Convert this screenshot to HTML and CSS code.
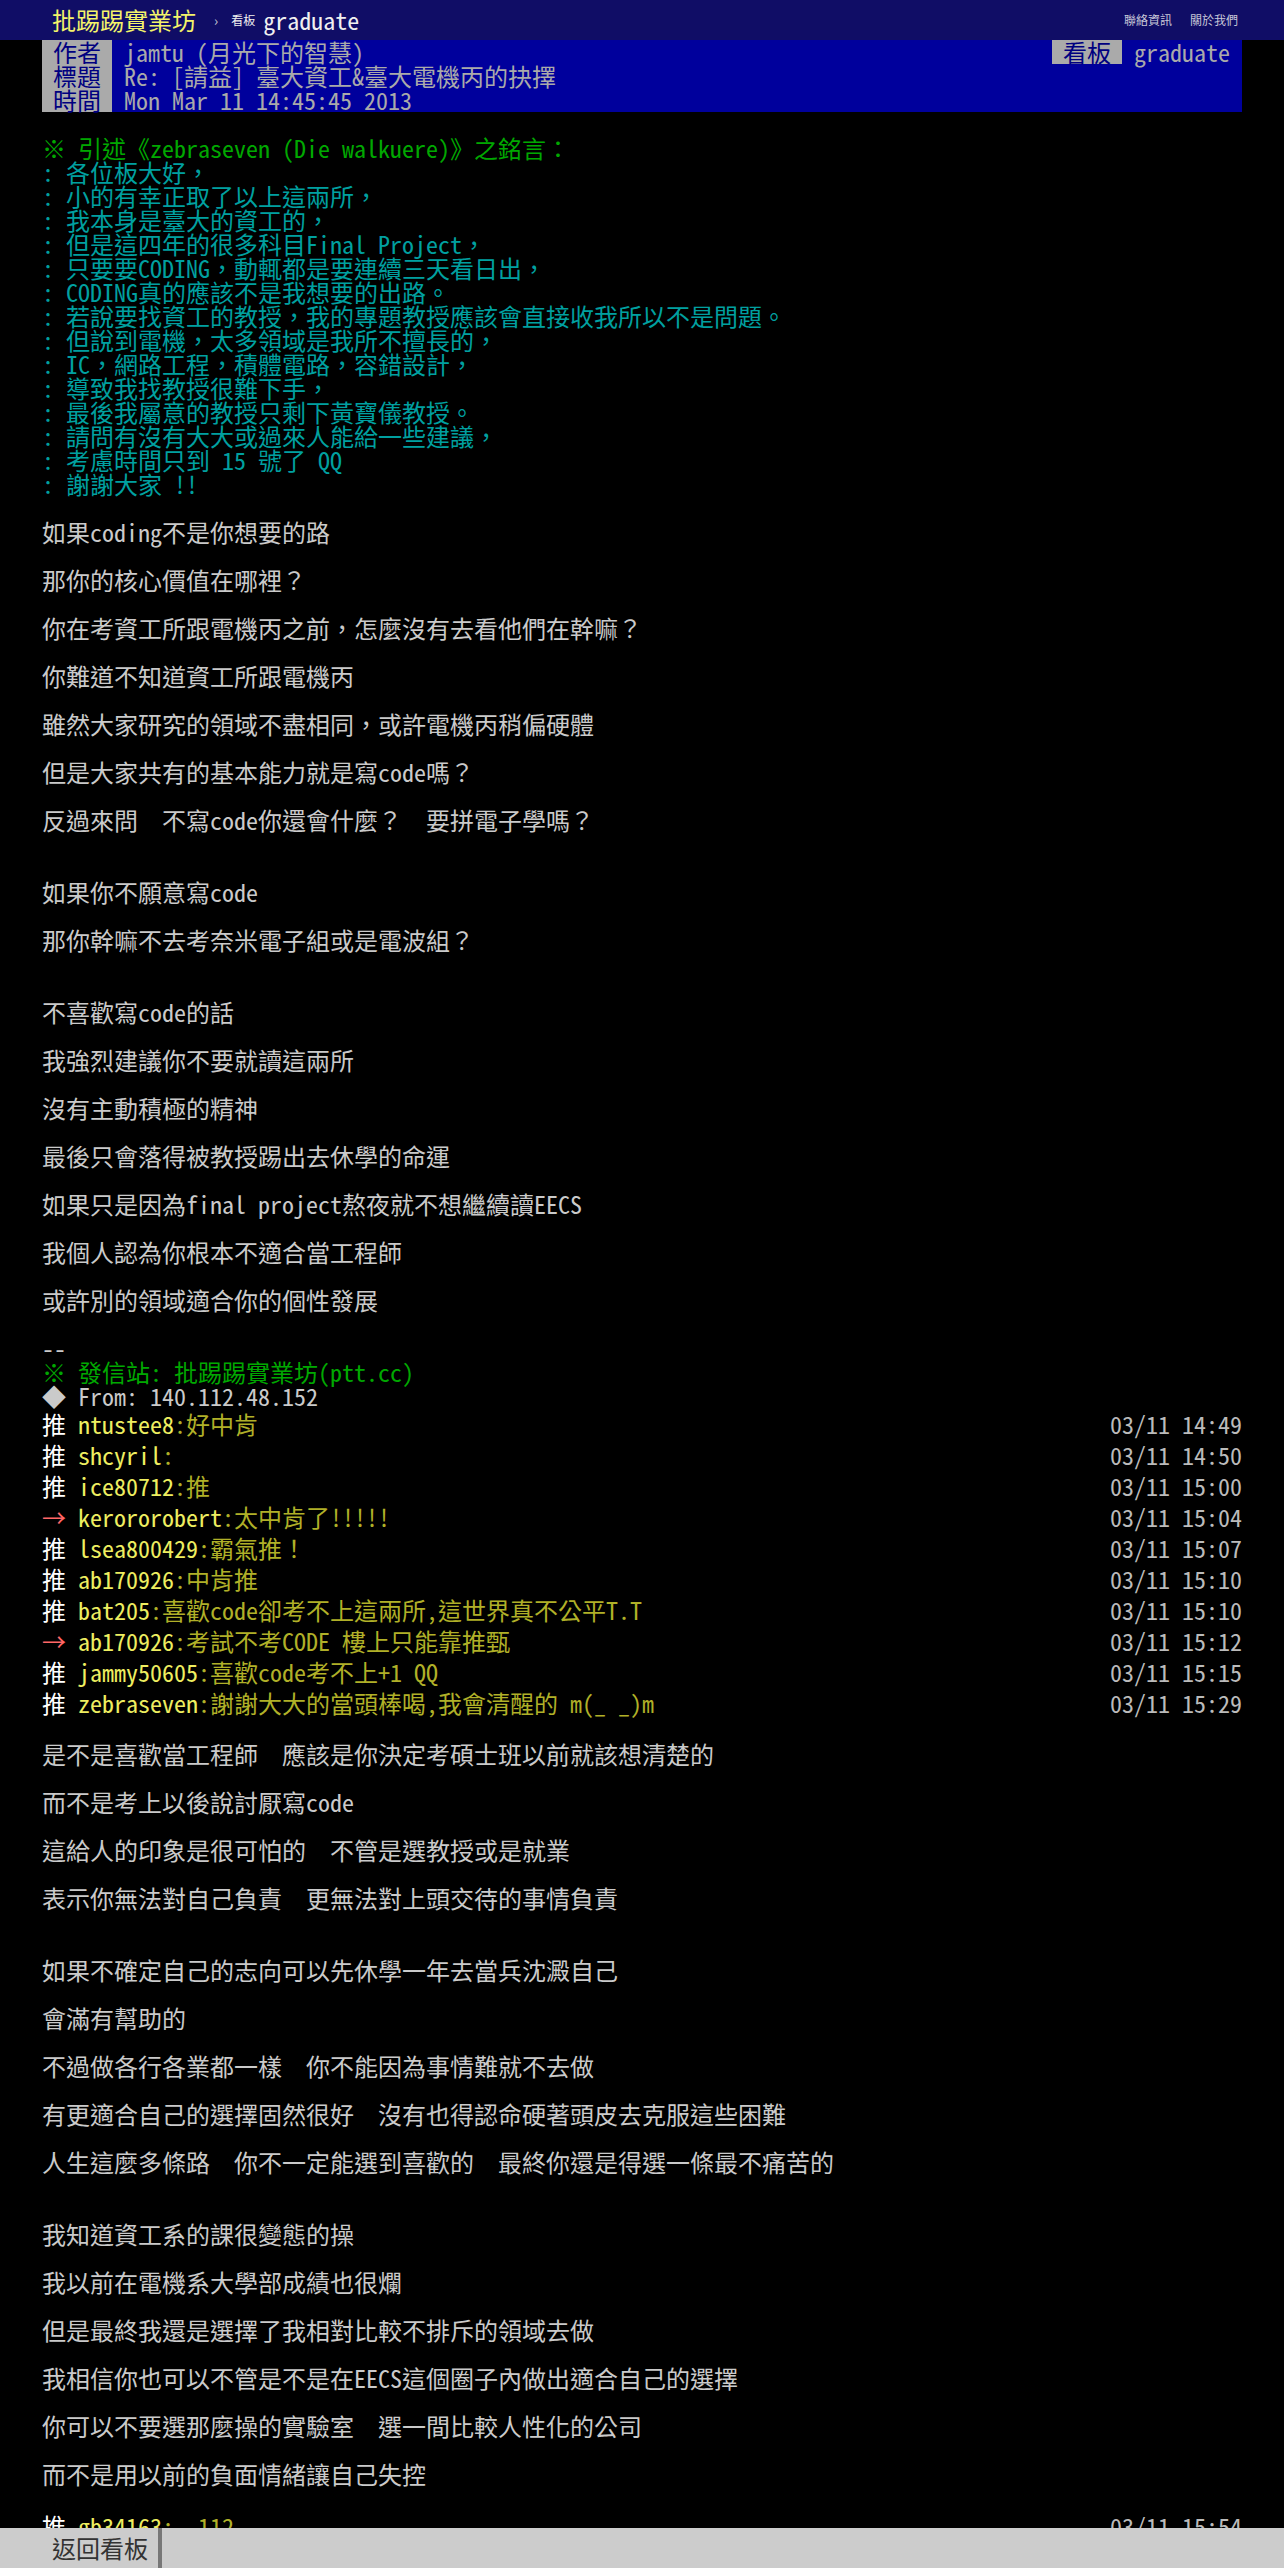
FILE: index.html
```html
<!DOCTYPE html>
<html lang="zh-Hant">
<head>
<meta charset="utf-8">
<title>Re: [請益] 臺大資工&amp;臺大電機丙的抉擇 - 看板 graduate - 批踢踢實業坊</title>
<link rel="stylesheet" href="styles.css">
</head>
<body>
<div class="topbar">
  <div class="topbar-inner">
    <a class="logo">批踢踢實業坊</a>
    <span class="sep">›</span>
    <a class="board"><span class="board-label">看板</span><span class="board-name">graduate</span></a>
    <nav class="links"><a>聯絡資訊</a><a>關於我們</a></nav>
  </div>
</div>

<div class="main">
  <div class="meta">
    <div class="metaline">
      <span class="tag">作者</span><span class="value">jamtu (月光下的智慧)</span>
      <span class="tag">看板</span><span class="value value-right">graduate</span>
    </div>
    <div class="metaline">
      <span class="tag">標題</span><span class="value">Re: [請益] 臺大資工&amp;臺大電機丙的抉擇</span>
    </div>
    <div class="metaline">
      <span class="tag">時間</span><span class="value">Mon Mar 11 14:45:45 2013</span>
    </div>
  </div>

<div class="text first"><span class="f2">※ 引述《zebraseven (Die walkuere)》之銘言：</span>
<span class="f6">: 各位板大好，</span>
<span class="f6">: 小的有幸正取了以上這兩所，</span>
<span class="f6">: 我本身是臺大的資工的，</span>
<span class="f6">: 但是這四年的很多科目Final Project，</span>
<span class="f6">: 只要要CODING，動輒都是要連續三天看日出，</span>
<span class="f6">: CODING真的應該不是我想要的出路。</span>
<span class="f6">: 若說要找資工的教授，我的專題教授應該會直接收我所以不是問題。</span>
<span class="f6">: 但說到電機，太多領域是我所不擅長的，</span>
<span class="f6">: IC，網路工程，積體電路，容錯設計，</span>
<span class="f6">: 導致我找教授很難下手，</span>
<span class="f6">: 最後我屬意的教授只剩下黃寶儀教授。</span>
<span class="f6">: 請問有沒有大大或過來人能給一些建議，</span>
<span class="f6">: 考慮時間只到 15 號了 QQ</span>
<span class="f6">: 謝謝大家 !!</span>

如果coding不是你想要的路

那你的核心價值在哪裡？

你在考資工所跟電機丙之前，怎麼沒有去看他們在幹嘛？

你難道不知道資工所跟電機丙

雖然大家研究的領域不盡相同，或許電機丙稍偏硬體

但是大家共有的基本能力就是寫code嗎？

反過來問　不寫code你還會什麼？　要拼電子學嗎？


如果你不願意寫code

那你幹嘛不去考奈米電子組或是電波組？


不喜歡寫code的話

我強烈建議你不要就讀這兩所

沒有主動積極的精神

最後只會落得被教授踢出去休學的命運

如果只是因為final project熬夜就不想繼續讀EECS

我個人認為你根本不適合當工程師

或許別的領域適合你的個性發展

--
<span class="f2">※ 發信站: 批踢踢實業坊(ptt.cc)</span>
◆ From: 140.112.48.152</div>

  <div class="pushes">
    <div class="push"><span class="push-tag">推 </span><span class="push-user">ntustee8</span><span class="push-content">:好中肯</span><span class="push-time">03/11 14:49</span></div>
    <div class="push"><span class="push-tag">推 </span><span class="push-user">shcyril</span><span class="push-content">:</span><span class="push-time">03/11 14:50</span></div>
    <div class="push"><span class="push-tag">推 </span><span class="push-user">ice80712</span><span class="push-content">:推</span><span class="push-time">03/11 15:00</span></div>
    <div class="push"><span class="push-tag arrow">→ </span><span class="push-user">kerororobert</span><span class="push-content">:太中肯了!!!!!</span><span class="push-time">03/11 15:04</span></div>
    <div class="push"><span class="push-tag">推 </span><span class="push-user">lsea800429</span><span class="push-content">:霸氣推！</span><span class="push-time">03/11 15:07</span></div>
    <div class="push"><span class="push-tag">推 </span><span class="push-user">ab170926</span><span class="push-content">:中肯推</span><span class="push-time">03/11 15:10</span></div>
    <div class="push"><span class="push-tag">推 </span><span class="push-user">bat205</span><span class="push-content">:喜歡code卻考不上這兩所,這世界真不公平T.T</span><span class="push-time">03/11 15:10</span></div>
    <div class="push"><span class="push-tag arrow">→ </span><span class="push-user">ab170926</span><span class="push-content">:考試不考CODE 樓上只能靠推甄</span><span class="push-time">03/11 15:12</span></div>
    <div class="push"><span class="push-tag">推 </span><span class="push-user">jammy50605</span><span class="push-content">:喜歡code考不上+1 QQ</span><span class="push-time">03/11 15:15</span></div>
    <div class="push"><span class="push-tag">推 </span><span class="push-user">zebraseven</span><span class="push-content">:謝謝大大的當頭棒喝,我會清醒的 m(_ _)m</span><span class="push-time">03/11 15:29</span></div>
  </div>

<div class="text second">是不是喜歡當工程師　應該是你決定考碩士班以前就該想清楚的

而不是考上以後說討厭寫code

這給人的印象是很可怕的　不管是選教授或是就業

表示你無法對自己負責　更無法對上頭交待的事情負責


如果不確定自己的志向可以先休學一年去當兵沈澱自己

會滿有幫助的

不過做各行各業都一樣　你不能因為事情難就不去做

有更適合自己的選擇固然很好　沒有也得認命硬著頭皮去克服這些困難

人生這麼多條路　你不一定能選到喜歡的　最終你還是得選一條最不痛苦的


我知道資工系的課很變態的操

我以前在電機系大學部成績也很爛

但是最終我還是選擇了我相對比較不排斥的領域去做

我相信你也可以不管是不是在EECS這個圈子內做出適合自己的選擇

你可以不要選那麼操的實驗室　選一間比較人性化的公司

而不是用以前的負面情緒讓自己失控</div>

  <div class="pushes">
    <div class="push"><span class="push-tag">推 </span><span class="push-user">gb34163</span><span class="push-content">:  112</span><span class="push-time">03/11 15:54</span></div>
  </div>
</div>

<div class="bottombar">
  <div class="bottombar-inner">
    <a class="back">返回看板</a>
  </div>
</div>
</body>
</html>
```

FILE: styles.css
```css
html, body {
  margin: 0;
  padding: 0;
  background: #000;
}

body {
  color: #cacaca;
  font-family: "Noto Sans Mono CJK TC", "Noto Sans CJK TC", "DejaVu Sans Mono", monospace;
  font-size: 24px;
  line-height: 24px;
}

a {
  color: inherit;
  text-decoration: none;
}

/* top bar */
.topbar {
  background: #100d66;
  height: 40px;
}

.topbar-inner {
  width: 1200px;
  height: 40px;
  margin: 0 auto;
  padding: 0 4px 0 10px;
  box-sizing: border-box;
  display: flex;
  align-items: center;
}

.logo {
  color: #f4f46a;
  font-size: 24px;
}

.sep {
  color: #c8c8d8;
  font-size: 14px;
  margin-left: 18px;
}

.board {
  display: flex;
  align-items: center;
  color: #f0f0f0;
}

.board-label {
  font-size: 12px;
  margin-left: 13px;
}

.board-name {
  font-size: 24px;
  margin-left: 8px;
}

.links {
  margin-left: auto;
  display: flex;
  gap: 18px;
  font-size: 12px;
  color: #c8c8d8;
}

/* main */
.main {
  width: 1200px;
  margin: 0 auto;
}

.meta {
  background: #00009c;
}

.metaline {
  display: flex;
  height: 24px;
}

.tag {
  width: 70px;
  text-align: center;
  background: #aaa;
  color: #000080;
  flex: none;
}

.value {
  color: #aaa;
  padding-left: 12px;
  flex: 1;
}

.value-right {
  flex: none;
  padding: 0 12px;
}

.text {
  white-space: pre-wrap;
}

.text.first {
  margin-top: 24px;
}

.text.second {
  margin-top: 24px;
  margin-bottom: 24px;
}

.f2 {
  color: #00a800;
}

.f6 {
  color: #00a0a0;
}

/* pushes */
.push {
  display: flex;
  height: 31px;
  line-height: 31px;
  white-space: pre;
}

.push-tag {
  color: #fff;
  width: 36px;
  flex: none;
}

.push-tag.arrow {
  color: #f66;
}

.push-user {
  color: #eeee60;
}

.push-content {
  color: #b0b028;
}

.push-time {
  margin-left: auto;
  color: #bbb;
}

/* bottom bar */
.bottombar {
  position: fixed;
  left: 0;
  right: 0;
  bottom: 0;
  height: 40px;
  background: #ccc;
}

.bottombar-inner {
  width: 1200px;
  height: 40px;
  margin: 0 auto;
  display: flex;
}

.back {
  padding: 0 10px;
  line-height: 40px;
  color: #333;
  border-right: 4px solid #777;
}
```
